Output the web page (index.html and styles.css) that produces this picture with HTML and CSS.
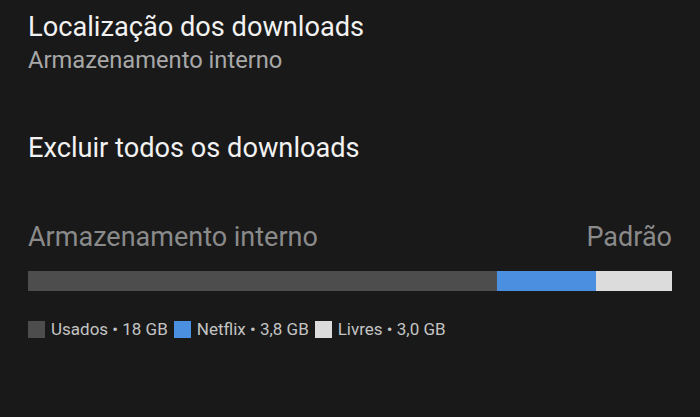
FILE: index.html
```html
<!DOCTYPE html>
<html lang="pt">
<head>
<meta charset="utf-8">
<link rel="stylesheet" href="styles.css">
</head>
<body>
<main class="page">
  <section class="setting">
    <div class="setting-title">Localização dos downloads</div>
    <div class="setting-sub">Armazenamento interno</div>
  </section>
  <section class="setting setting-delete">
    <div class="setting-title">Excluir todos os downloads</div>
  </section>
  <section class="storage">
    <div class="storage-head">
      <span class="storage-name">Armazenamento interno</span>
      <span class="storage-default">Padrão</span>
    </div>
    <div class="bar">
      <div class="seg seg-used" style="width: 72.8%"></div>
      <div class="seg seg-netflix" style="width: 15.4%"></div>
      <div class="seg seg-free"></div>
    </div>
    <div class="legend">
      <span class="legend-item"><span class="swatch swatch-used"></span>Usados • 18 GB</span>
      <span class="legend-item"><span class="swatch swatch-netflix"></span>Netflix • 3,8 GB</span>
      <span class="legend-item"><span class="swatch swatch-free"></span>Livres • 3,0 GB</span>
    </div>
  </section>
</main>
</body>
</html>
```
FILE: styles.css
```css
html, body {
  margin: 0;
  padding: 0;
  background: #191919;
}
body {
  width: 700px;
  height: 417px;
  overflow: hidden;
  font-family: Roboto, "Liberation Sans", sans-serif;
}
.page {
  padding: 9px 28px 0 28px;
}
.setting-title {
  color: #f2f2f2;
  font-size: 27.2px;
  line-height: 36px;
}
.setting-sub {
  color: #a8a8a8;
  font-size: 23.7px;
  line-height: 30px;
}
.setting-delete {
  margin-top: 55px;
}
.storage {
  margin-top: 53px;
}
.storage-head {
  display: flex;
  justify-content: space-between;
  align-items: baseline;
  color: #8a8a8a;
  font-size: 27px;
  line-height: 36px;
}
.bar {
  display: flex;
  height: 20px;
  margin-top: 16px;
}
.seg-used { background: #4d4d4d; }
.seg-netflix { background: #4b8fe0; }
.seg-free { background: #dcdcdc; flex: 1; }
.legend {
  display: flex;
  gap: 6px;
  margin-top: 28px;
  color: #c4c4c4;
  font-size: 17px;
  line-height: 20px;
}
.legend-item {
  display: flex;
  align-items: center;
  gap: 6px;
}
.swatch {
  width: 17px;
  height: 17px;
  display: inline-block;
}
.swatch-used { background: #4d4d4d; }
.swatch-netflix { background: #4b8fe0; }
.swatch-free { background: #dcdcdc; }
```
